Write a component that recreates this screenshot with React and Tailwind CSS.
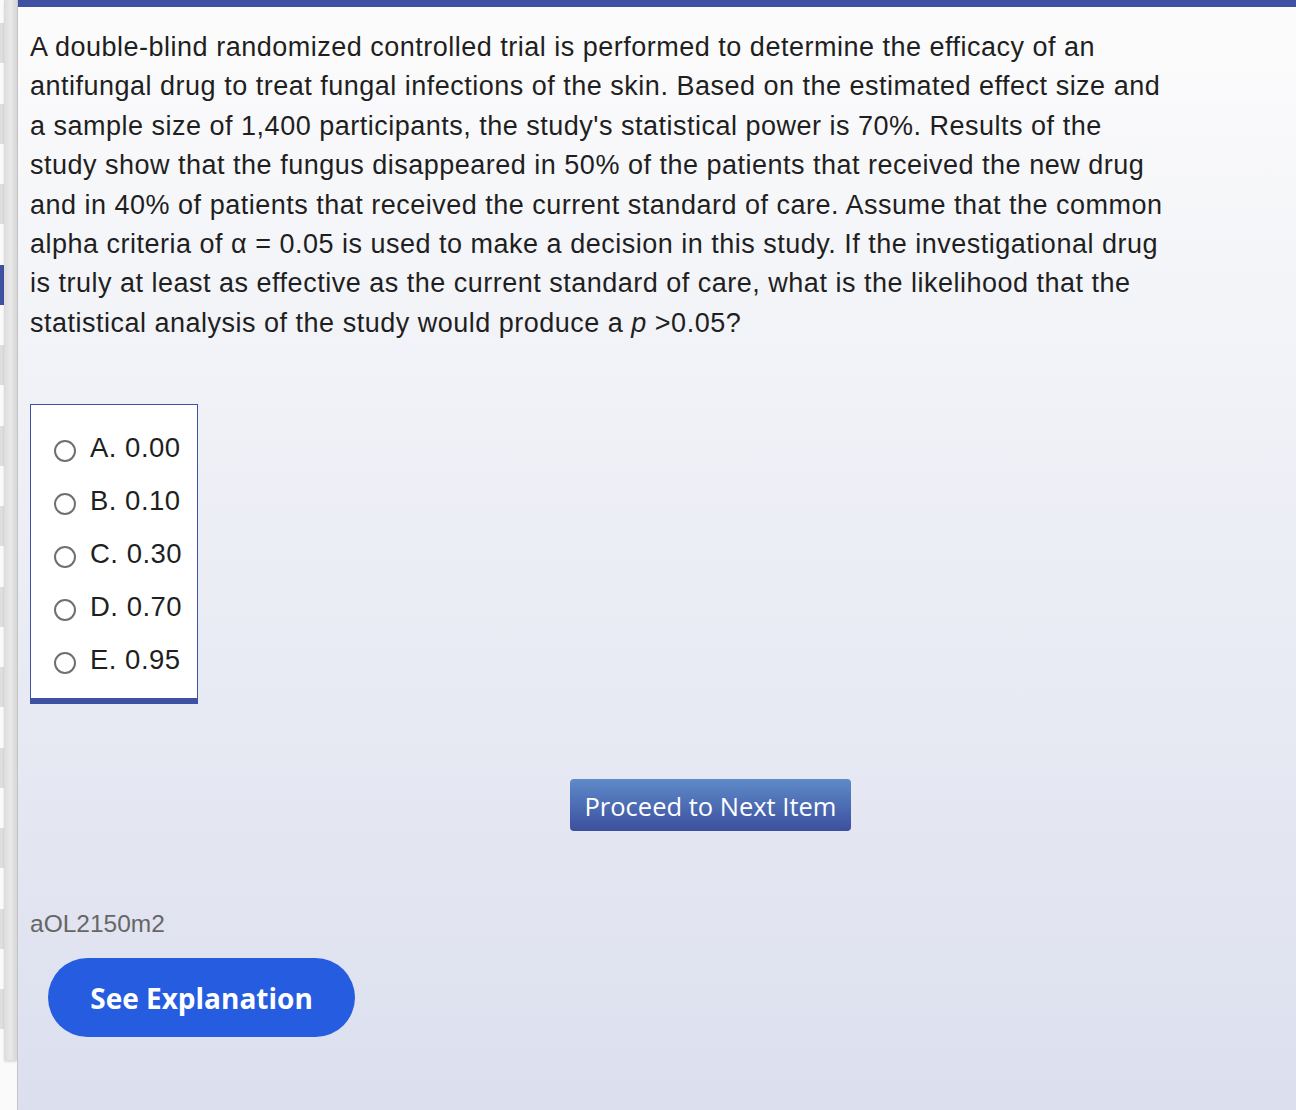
import React from "react";

const options = ["A. 0.00", "B. 0.10", "C. 0.30", "D. 0.70", "E. 0.95"];

const lines = [
  "A double-blind randomized controlled trial is performed to determine the efficacy of an",
  "antifungal drug to treat fungal infections of the skin. Based on the estimated effect size and",
  "a sample size of 1,400 participants, the study's statistical power is 70%. Results of the",
  "study show that the fungus disappeared in 50% of the patients that received the new drug",
  "and in 40% of patients that received the current standard of care. Assume that the common",
  "alpha criteria of α = 0.05 is used to make a decision in this study. If the investigational drug",
  "is truly at least as effective as the current standard of care, what is the likelihood that the",
];

function Strip() {
  const rows = [];
  for (let i = 0; i < 13; i++) {
    rows.push(
      <div key={i} className="flex flex-col">
        <div className={i === 3 ? "h-[40px] bg-[#3f51a2]" : "h-[40px] bg-[#dedede]"} />
        <div className="h-[40.5px] bg-[#fafafa]" />
      </div>
    );
  }
  return (
    <div className="flex w-[18px] shrink-0 bg-[#fafafa]">
      <div className="w-[4px] flex flex-col">
        <div className="h-[23px] bg-[#fafafa]" />
        {rows}
      </div>
      <div className="flex flex-col w-[13px]">
        <div className="h-[1060px] bg-gradient-to-r from-[#dcdcdc] via-[#e9e9e9] to-[#d6d6d6] shadow-[0_2px_2px_rgba(0,0,0,0.12)]" />
      </div>
      <div className="w-px bg-[#c4c4c4]" />
    </div>
  );
}

export default function App() {
  return (
    <div className="flex h-[1110px] w-[1296px] overflow-hidden" style={{ fontFamily: "'Liberation Sans', Arial, sans-serif" }}>
      <Strip />
      <div className="flex-1 flex flex-col bg-gradient-to-b from-[#fcfcfc] to-[#dcdfee]">
        <div className="h-[7px] bg-[#3f51a2]" />
        <div className="pl-[12px] pr-[20px] pt-[21px]">
          <div className="text-[27px] leading-[39.4px] tracking-[0.5px] text-[#1f1f1f] whitespace-nowrap">
            {lines.map((l) => (
              <div key={l}>{l}</div>
            ))}
            <div>
              statistical analysis of the study would produce a <i>p</i>&nbsp;&gt;0.05?
            </div>
          </div>
          <div className="mt-[61px] w-[168px] h-[300px] bg-white border border-[#3f51a2] border-b-[6px] flex flex-col pt-[16px] pl-[23px]">
            {options.map((o) => (
              <div key={o} className="h-[53px] flex items-center gap-[14px]">
                <span className="mt-[6px] w-[22px] h-[22px] shrink-0 rounded-full border-2 border-[#707070] bg-white" />
                <span className="text-[27.5px] tracking-[0.5px] text-[#1f1f1f]">{o}</span>
              </div>
            ))}
          </div>
          <div className="flex mt-[75px] pl-[540px]">
            <button
              className="w-[281px] h-[52px] rounded-[4px] bg-gradient-to-b from-[#5e8bc9] to-[#3d4f9e] text-white text-[25.5px] pt-[1px]"
              style={{ fontFamily: "'Open Sans', sans-serif" }}
            >
              Proceed to Next Item
            </button>
          </div>
          <div className="mt-[75px] text-[24.5px] text-[#666]">aOL2150m2</div>
          <button
            className="mt-[15px] ml-[18px] w-[307px] h-[79px] rounded-full bg-[#255ce0] text-white text-[28px] font-bold"
            style={{ fontFamily: "'Open Sans', sans-serif" }}
          >
            See Explanation
          </button>
        </div>
      </div>
    </div>
  );
}
